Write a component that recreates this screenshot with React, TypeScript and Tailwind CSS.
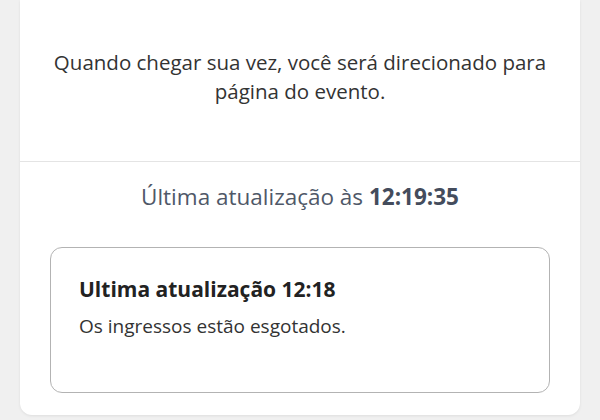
import React from 'react';

const App: React.FC = () => {
  return (
    <div
      className="h-[420px] w-[600px] overflow-hidden bg-[#f0f0f0] px-5"
      style={{ fontFamily: '"Open Sans", "Noto Sans", sans-serif' }}
    >
      <div className="rounded-b-xl bg-white shadow-[0_1px_3px_rgba(0,0,0,0.08)]">
        {/* aviso de redirecionamento */}
        <div className="h-[162px] border-b border-[#e4e4e4] px-4 pt-12">
          <p className="text-center text-[20.5px] leading-[29px] text-[#333333]">
            Quando chegar sua vez, você será direcionado para página do evento.
          </p>
        </div>

        <div className="px-[30px] pb-[22px] pt-5">
          <p className="text-center text-[22.5px] leading-[30px] text-[#4f5868]">
            Última atualização às <span className="font-bold text-[#444c5c]">12:19:35</span>
          </p>

          <div className="mt-[35px] h-[146px] rounded-xl border border-[#b3b3b3] px-7 pt-[27px]">
            <h3 className="text-[21px] font-bold leading-[28px] text-[#222222]">
              Ultima atualização 12:18
            </h3>
            <p className="mt-2.5 text-[19px] leading-[26px] text-[#333333]">
              Os ingressos estão esgotados.
            </p>
          </div>
        </div>
      </div>
    </div>
  );
};

export default App;
